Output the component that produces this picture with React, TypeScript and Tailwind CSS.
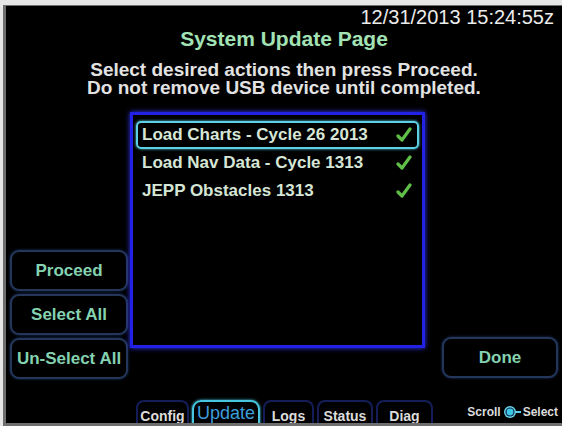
const items = [
  { label: "Load Charts - Cycle 26 2013", selected: true },
  { label: "Load Nav Data - Cycle 1313", selected: false },
  { label: "JEPP Obstacles 1313", selected: false },
];

const tabs = [
  { label: "Config", width: "w-[53px]", active: false },
  { label: "Update", width: "w-[68px]", active: true },
  { label: "Logs", width: "w-[51px]", active: false },
  { label: "Status", width: "w-[56px]", active: false },
  { label: "Diag", width: "w-[57px]", active: false },
];

function Check() {
  return (
    <svg width="16" height="16" viewBox="0 0 16 16">
      <path
        d="M2 9 L6 13 L14 2"
        fill="none"
        stroke="#5fbf48"
        strokeWidth="3.2"
        strokeLinecap="round"
        strokeLinejoin="round"
      />
    </svg>
  );
}

function SideButton({ label }: { label: string }) {
  return (
    <button className="h-[41px] w-full shrink-0 rounded-[9px] border-2 border-[#24375a] bg-black text-[17px] font-bold text-[#84d2b0] shadow-[0_0_3px_#1b3364]">
      {label}
    </button>
  );
}

function ScrollKnob() {
  return (
    <svg width="18" height="14" viewBox="0 0 18 14">
      <line x1="11" y1="7" x2="18" y2="7" stroke="#5fd0e6" strokeWidth="2" />
      <circle cx="7" cy="7" r="6" fill="#6cd6ea" />
      <circle cx="7" cy="7" r="4.6" fill="#0e2850" />
      <circle cx="7" cy="7" r="3.4" fill="#3cc8e4" />
    </svg>
  );
}

export default function App() {
  return (
    <div className="h-[426px] w-[562px] overflow-hidden bg-[#e6e6e6] pl-[3px] pt-[5px] font-['Liberation_Sans',Arial,sans-serif]">
      <div className="flex h-[421px] flex-col overflow-hidden border-b-[3px] border-l-[3px] border-t border-[#6e6e6e] bg-black">
        <div className="mt-[1px] shrink-0 pr-[8px] text-right text-[20px] leading-[20px] text-[#ececec]">
          12/31/2013 15:24:55z
        </div>
        <div className="shrink-0 text-center text-[21px] font-bold leading-[24px] text-[#a2e2b4]">
          System Update Page
        </div>
        <div className="mt-[10px] shrink-0 text-center text-[19px] font-bold leading-[18px] text-[#e2e2e2]">
          <div>Select desired actions then press Proceed.</div>
          <div>Do not remove USB device until completed.</div>
        </div>

        <div className="mt-[15px] flex h-[267px] shrink-0">
          <div className="ml-[4px] flex w-[118px] flex-col justify-end gap-[3px]">
            <SideButton label="Proceed" />
            <SideButton label="Select All" />
            <SideButton label="Un-Select All" />
          </div>

          <div className="ml-[2px] h-[236px] w-[295px] border-[3px] border-[#2222e6] px-[3px] pt-[6px] shadow-[0_0_5px_#3535ff]">
            {items.map((item) => (
              <div
                key={item.label}
                className={`flex h-[28px] items-center justify-between rounded-[5px] border-2 pl-[4px] pr-[5px] ${
                  item.selected
                    ? "border-[#5cd0e6] shadow-[0_0_3px_#5cd0e6]"
                    : "border-transparent"
                }`}
              >
                <span className="text-[17px] font-bold text-[#d6e6d6]">
                  {item.label}
                </span>
                <Check />
              </div>
            ))}
          </div>

          <div className="ml-auto mr-[4px] flex w-[116px] flex-col justify-end pb-[1px]">
            <SideButton label="Done" />
          </div>
        </div>

        <div className="mt-[21px] flex shrink-0">
          <div className="ml-[130px] flex gap-[3px]">
            {tabs.map((tab) =>
              tab.active ? (
                <div
                  key={tab.label}
                  className={`${tab.width} h-[30px] rounded-t-[9px] border-2 border-b-0 border-[#48c6e0] pt-[1px] text-center text-[18px] leading-[20px] text-[#3c9edb] shadow-[0_0_3px_#48c6e0]`}
                >
                  {tab.label}
                </div>
              ) : (
                <div
                  key={tab.label}
                  className={`${tab.width} h-[30px] rounded-t-[8px] border-2 border-b-0 border-[#141d58] pt-[6px] text-center text-[14px] font-bold leading-[16px] text-[#dcdcdc]`}
                >
                  {tab.label}
                </div>
              )
            )}
          </div>
          <div className="ml-auto mr-[4px] flex items-center gap-[2px] self-start pt-[5px] text-[12px] font-bold leading-[14px] text-[#dcdcdc]">
            <span>Scroll</span>
            <ScrollKnob />
            <span>Select</span>
          </div>
        </div>
      </div>
    </div>
  );
}
